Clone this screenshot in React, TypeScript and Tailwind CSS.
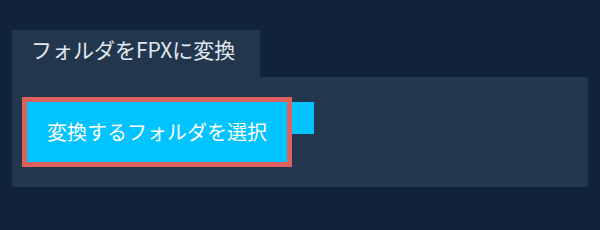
import React from 'react';

const App: React.FC = () => {
  return (
    <div className="w-[600px] h-[230px] bg-[#11233a] pt-[30px] px-[12px] font-['Noto_Sans_CJK_JP','Noto_Sans',sans-serif]">
      {/* tab header */}
      <div className="w-[248px] h-[47px] bg-[#22374e] pl-[19px] pt-[4px] text-[21px] leading-[30px] text-[#e3e8ee]">
        フォルダをFPXに変換
      </div>
      {/* panel body */}
      <div className="w-[576px] h-[110px] bg-[#22374e] pt-[20px] pl-[10px] flex items-start">
        <button className="h-[70px] border-[5px] border-[#e0605d] bg-[#00c3ff] px-[20px] text-[20px] leading-[30px] text-white">
          変換するフォルダを選択
        </button>
        <div className="mt-[5px] w-[22px] h-[32px] bg-[#00c3ff]" />
      </div>
    </div>
  );
};

export default App;
